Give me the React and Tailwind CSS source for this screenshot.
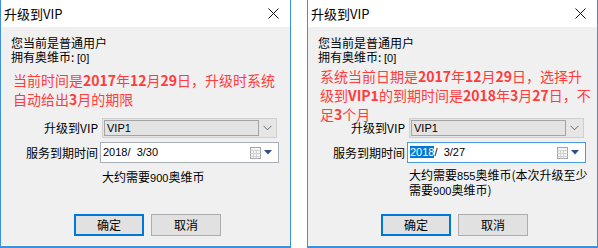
import React from 'react';

const cjk = { fontFamily: '"Noto Sans CJK SC", "Noto Sans", sans-serif' };
const tahoma = { fontFamily: '"Liberation Sans", "DejaVu Sans", sans-serif' };

const Num = ({ children }) => (
    <span className="text-[11px]" style={tahoma}>{children}</span>
);

const CloseIcon = () => (
    <svg width="11" height="11" viewBox="0 0 11 11" className="block">
        <path d="M0.5 0.5L10.5 10.5M10.5 0.5L0.5 10.5" stroke="#111" strokeWidth="1" />
    </svg>
);

const Chevron = () => (
    <svg width="9" height="6" viewBox="0 0 9 6" className="block">
        <path d="M0.5 0.8L4.5 4.8L8.5 0.8" stroke="#6d6d6d" strokeWidth="1" fill="none" />
    </svg>
);

const CalendarIcon = () => (
    <div className="flex items-center gap-[2px]">
        <svg width="12" height="12" viewBox="0 0 12 12" className="block">
            <rect x="0.5" y="0.5" width="10" height="11" fill="#f4f4f4" stroke="#a5a5a5" />
            <path d="M0.5 3.5H10.5M0.5 6.5H10.5M0.5 9.5H10.5M3.5 3.5V11.5M6.5 3.5V11.5" stroke="#d2d2d2" strokeWidth="1" />
        </svg>
        <svg width="8" height="5" viewBox="0 0 8 5" className="block">
            <path d="M0 0H8L4 4.5Z" fill="#2c4f86" />
        </svg>
    </div>
);

const Dialog = ({ redLines, redTop, note, dateText, focused }) => (
    <div className="w-[291px] h-[248px] flex flex-col border-l border-r border-b-2 border-[#3d8fe0] bg-white" style={cjk}>
        {/* Title bar */}
        <div className="h-[27px] flex items-center justify-between pl-[3px] pr-[11px] bg-white shrink-0">
            <span className="text-[13px] leading-none text-black">升级到VIP</span>
            <CloseIcon />
        </div>

        {/* Body */}
        <div className="flex-1 flex flex-col bg-[#f0f0f0]">
            <div className="h-[91px] shrink-0 px-[10px] pt-[9px] text-black">
                <p className="text-[12px] leading-[14px]">您当前是普通用户</p>
                <p className="text-[12px] leading-[14px]">
                    拥有奥维币: <Num>[0]</Num>
                </p>
                <div className={`${redTop} pl-[2px] text-[14px] leading-[19px] text-[#ff3c3c] whitespace-nowrap`}>
                    {redLines.map((line, i) => (
                        <p key={i}>{line}</p>
                    ))}
                </div>
            </div>

            {/* Form */}
            <div className="flex items-center h-[20px]">
                <span className="w-[98px] text-right text-[12px] pr-[1px] text-black">升级到VIP</span>
                <div className="ml-[3px] w-[175px] h-[20px] flex items-center border border-[#cfcfcf] bg-[#e6e6e6]">
                    <div className="flex-1 h-[16px] ml-[1px] flex items-center border border-[#a3a3a3] bg-[#e3e3e3] pl-[2px] text-[11px] text-black" style={tahoma}>
                        VIP1
                    </div>
                    <div className="w-[17px] flex justify-center">
                        <Chevron />
                    </div>
                </div>
            </div>
            <div className="flex items-center h-[21px] mt-[4px]">
                <span className="w-[98px] text-right text-[12px] pr-[1px] text-black">服务到期时间</span>
                <div className={`ml-[1px] w-[179px] h-[21px] flex items-center justify-between border ${focused ? 'border-[#4a9be6]' : 'border-[#a9aeb6]'} bg-white pl-[2px] pr-[6px]`}>
                    <span className="text-[11px] text-black whitespace-pre" style={tahoma}>{dateText}</span>
                    <CalendarIcon />
                </div>
            </div>
            <div className="h-[41px] mt-[5px] pl-[101px] text-[12px] leading-[13px] text-black">
                {note}
            </div>

            {/* Buttons */}
            <div className="flex gap-[7px] pl-[73px] mt-[5px]">
                <button className="w-[70px] h-[22px] text-[12px] text-black bg-[#e1e1e1] border-2 border-[#0078d7]">确定</button>
                <button className="w-[70px] h-[22px] text-[12px] text-black bg-[#e1e1e1] border border-[#adadad]">取消</button>
            </div>
            <div className="flex-1" />
            <div className="h-px bg-[#fbfbfb]" />
        </div>
    </div>
);

export default function App() {
    return (
        <div className="w-[598px] h-[248px] bg-white flex gap-[16px] overflow-hidden">
            <Dialog
                redTop="mt-[6px]"
                redLines={[
                    <>当前时间是<b>2017</b>年<b>12</b>月<b>29</b>日，升级时系统</>,
                    <>自动给出<b>3</b>月的期限</>,
                ]}
                note={<p className="leading-[15px] pt-[1px]">大约需要<Num>900</Num>奥维币</p>}
                dateText="2018/  3/30"
            />
            <Dialog
                redTop="mt-[2px]"
                focused
                redLines={[
                    <>系统当前日期是<b>2017</b>年<b>12</b>月<b>29</b>日，选择升</>,
                    <>级到<b>VIP1</b>的到期时间是<b>2018</b>年<b>3</b>月<b>27</b>日，不</>,
                    <>足<b>3</b>个月</>,
                ]}
                note={
                    <>
                        <p>大约需要<Num>855</Num>奥维币(本次升级至少</p>
                        <p>需要<Num>900</Num>奥维币)</p>
                    </>
                }
                dateText={
                    <>
                        <span className="bg-[#0078d7] text-white">2018</span>/  3/27
                    </>
                }
            />
        </div>
    );
}
